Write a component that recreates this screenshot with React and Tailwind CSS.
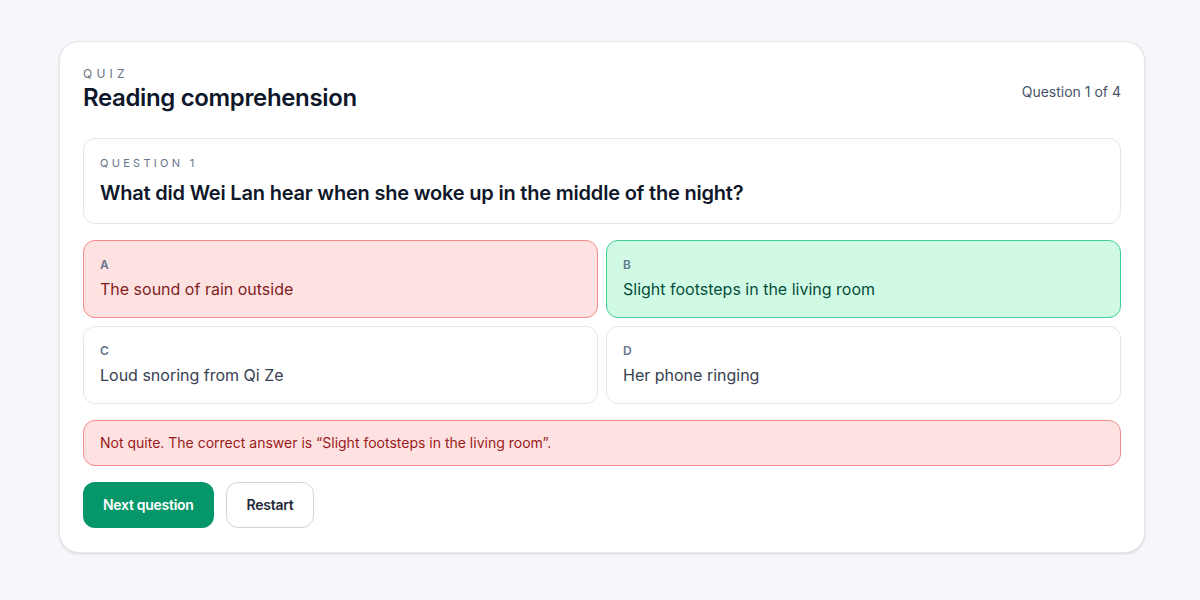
const options = [
  { key: 'A', text: 'The sound of rain outside', state: 'wrong' },
  { key: 'B', text: 'Slight footsteps in the living room', state: 'correct' },
  { key: 'C', text: 'Loud snoring from Qi Ze', state: 'idle' },
  { key: 'D', text: 'Her phone ringing', state: 'idle' },
];

const optionStyles = {
  wrong: 'bg-[#fee2e2] border-[#f28b8b] text-[#7f1d1d]',
  correct: 'bg-[#d1fae5] border-[#3fcf95] text-[#064e3b]',
  idle: 'bg-white border-[#e5e7eb] text-[#374151]',
};

function Option({ option }) {
  return (
    <div className={`rounded-xl border px-4 py-4 ${optionStyles[option.state]}`}>
      <div className="text-xs font-semibold leading-4 text-[#64748b]">{option.key}</div>
      <div className="mt-1 text-base leading-6">{option.text}</div>
    </div>
  );
}

export default function App() {
  return (
    <div
      className="min-h-[600px] bg-[#f6f7fb] pl-[59px] pt-[41px]"
      style={{ fontFamily: 'Inter, "Noto Sans", sans-serif' }}
    >
      <div className="w-[1086px] rounded-[20px] border border-[#e5e7eb] bg-white px-[23px] py-6 shadow-sm">
        <div className="flex items-start justify-between">
          <div>
            <div className="text-xs leading-4 tracking-[0.35em] text-[#6b7280]">QUIZ</div>
            <h1 className="text-2xl font-semibold leading-8 tracking-[-0.015em] text-[#0f172a]">
              Reading comprehension
            </h1>
          </div>
          <div className="mt-4 text-sm text-[#475569]">Question 1 of 4</div>
        </div>

        <div className="mt-6 rounded-xl border border-[#e5e7eb] p-4">
          <div className="mb-2 text-[11px] leading-4 tracking-[0.3em] text-[#64748b]">QUESTION 1</div>
          <h2 className="text-xl font-semibold leading-7 tracking-[-0.01em] text-[#0f172a]">
            What did Wei Lan hear when she woke up in the middle of the night?
          </h2>
        </div>

        <div className="mt-4 grid grid-cols-2 gap-2">
          {options.map((o) => (
            <Option key={o.key} option={o} />
          ))}
        </div>

        <div className="mt-4 rounded-xl border border-[#f28b8b] bg-[#fee2e2] px-4 py-3 text-sm leading-5 text-[#991b1b]">
          Not quite. The correct answer is “Slight footsteps in the living room”.
        </div>

        <div className="mt-4 flex gap-3">
          <button className="rounded-xl bg-[#059669] px-5 py-[12.5px] text-sm font-semibold leading-5 tracking-[-0.02em] text-white">
            Next question
          </button>
          <button className="rounded-xl border border-[#d1d5db] bg-white px-5 py-3 text-sm font-semibold leading-5 tracking-[-0.02em] text-[#1f2937]">
            Restart
          </button>
        </div>
      </div>
    </div>
  );
}
